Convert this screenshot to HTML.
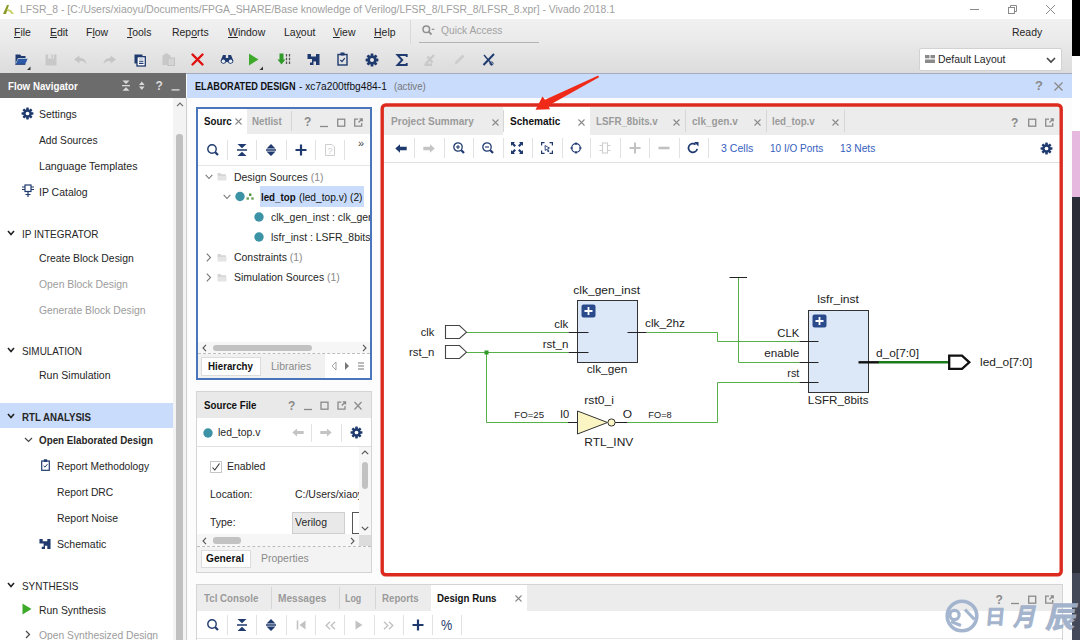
<!DOCTYPE html>
<html><head><meta charset="utf-8"><title>LFSR_8 - Vivado 2018.1</title>
<style>
*{box-sizing:border-box;margin:0;padding:0}
html,body{width:1080px;height:640px;overflow:hidden;background:#fff;font-family:"Liberation Sans",sans-serif;font-size:11.2px;color:#262626}
.a{position:absolute}
.t{position:absolute;white-space:nowrap;line-height:14px;height:14px;font-size:11.2px;transform:scaleX(.935);transform-origin:0 50%}
.b{font-weight:bold;transform:scaleX(.87)}
.g{color:#9c9c9c}
.r{transform-origin:100% 50%}
u{text-decoration:underline;text-underline-offset:1px}
svg{position:absolute;overflow:visible}
#win{left:0;top:0;width:1072px;height:640px;background:#fcfcfc;overflow:hidden}
</style></head><body>
<div id="win" class="a">
<!-- title bar -->
<div class="a" style="left:0;top:0;width:1072px;height:19px;background:#fff"></div>
<svg style="left:2px;top:3px" width="13" height="13" viewBox="0 0 13 13"><path d="M1 11 L5 2 L7 2 L4 11 Z" fill="#8c9a2a"/><path d="M5.5 6 L9 7 L12 11 L9.5 11 L7.5 8.5 L4.8 8 Z" fill="#c9d36a"/></svg>
<div class="t" style="left:20px;top:3px;font-size:10.400px;color:#a0a0a0;transform:scaleX(0.9986);">LFSR_8 - [C:/Users/xiaoyu/Documents/FPGA_SHARE/Base knowledge of Verilog/LFSR_8/LFSR_8/LFSR_8.xpr] - Vivado 2018.1</div>
<svg style="left:970px;top:4px" width="90" height="12" viewBox="0 0 90 12" fill="none" stroke="#8a8a8a" stroke-width="1"><path d="M0 5.5 H9"/><rect x="38.5" y="3.5" width="6" height="6"/><path d="M40.500 3.5 V1.5 H46.500 V7.500 H44.500"/><path d="M76 1 L85 10 M85 1 L76 10"/></svg>

<!-- menu bar -->
<div class="a" style="left:0;top:19px;width:1072px;height:54px;background:linear-gradient(#f1f1f1,#e9e9e9 45%,#dcdcdc)"></div>
<div class="t" style="left:14px;top:25px"><u>F</u>ile</div>
<div class="t" style="left:50px;top:25px"><u>E</u>dit</div>
<div class="t" style="left:86px;top:25px">F<u>l</u>ow</div>
<div class="t" style="left:127px;top:25px"><u>T</u>ools</div>
<div class="t" style="left:172px;top:25px">Rep<u>o</u>rts</div>
<div class="t" style="left:228px;top:25px"><u>W</u>indow</div>
<div class="t" style="left:284px;top:25px">La<u>y</u>out</div>
<div class="t" style="left:333px;top:25px"><u>V</u>iew</div>
<div class="t" style="left:374px;top:25px"><u>H</u>elp</div>
<div class="a" style="left:410px;top:20px;width:1px;height:24px;background:#d8d8d8"></div>
<svg style="left:421.500px;top:25px" width="16" height="11" viewBox="0 0 16 11" fill="none" stroke="#8f8f8f" stroke-width="1.500"><circle cx="4.300" cy="4.300" r="3.300"/><path d="M6.600 6.600 L9.500 9.500" stroke-width="1.800"/><path d="M9.800 4.300 H12.300" stroke-width="1.200"/></svg>
<div class="t" style="left:440.500px;top:23.300px;color:#a2a2a2;transform:scaleX(0.9158);">Quick Access</div>
<div class="a" style="left:419px;top:42px;width:120px;height:1px;background:#b4b4b4"></div>
<div class="t" style="left:1012px;top:25px">Ready</div>

<!-- toolbar -->
<div class="a" style="left:0;top:73px;width:1072px;height:1px;background:#a4adbd"></div>
<svg style="left:14px;top:53px" width="18" height="18" viewBox="0 0 18 18"><path d="M1.500 1.500 H6 L7.500 3 H11.500 V5 H4 L1.500 10.500 Z" fill="#1f3a6e"/><path d="M4.200 5.800 H13.600 L11.200 11.200 H1.800 Z" fill="#2d5aa6"/><path d="M1.500 10.700 L1.500 11.300 H11.300" stroke="#1f3a6e" stroke-width="1" fill="none"/><path d="M16.500 13.500 V17 H13 Z" fill="#333"/></svg>
<svg style="left:45px;top:54px" width="12" height="12" viewBox="0 0 12 12"><path d="M0.500 0.500 H11.500 V11.500 H0.500 Z" fill="#c8c8c8"/><rect x="3" y="0.500" width="6" height="4" fill="#e2e2e2"/><rect x="6.500" y="1" width="1.500" height="3" fill="#c8c8c8"/></svg>
<svg style="left:74px;top:55px" width="13" height="10" viewBox="0 0 13 10"><path d="M0 4.500 L5.500 0.500 V3 C9.500 3 12 5 12.500 9 C10.500 6.500 8.500 6 5.500 6 V8.500 Z" fill="#c6c6c6"/></svg>
<svg style="left:103px;top:55px" width="13" height="10" viewBox="0 0 13 10"><path d="M13 4.500 L7.500 0.500 V3 C3.500 3 1 5 0.500 9 C2.500 6.500 4.500 6 7.500 6 V8.500 Z" fill="#c6c6c6"/></svg>
<svg style="left:133.500px;top:53.500px" width="13" height="13" viewBox="0 0 13 13"><rect x="0.500" y="0.500" width="8" height="9" fill="#1f3a6e"/><rect x="3" y="2.700" width="8.300" height="9.300" fill="#fff" stroke="#1f3a6e" stroke-width="1.300"/><path d="M5 7.200 H9.500 M5 9.400 H9.500" stroke="#1f3a6e" stroke-width="1.100"/><path d="M5 5 H9.500" stroke="#8fa0c0" stroke-width="0.900"/></svg>
<svg style="left:162px;top:53px" width="13" height="13" viewBox="0 0 13 13"><rect x="0.500" y="2" width="8" height="10" fill="#c8c8c8"/><rect x="2.500" y="0.500" width="4" height="3" fill="#c8c8c8"/><rect x="6" y="5" width="6.500" height="7.500" fill="#d4d4d4" stroke="#c2c2c2" stroke-width="1"/></svg>
<svg style="left:191px;top:53px" width="13" height="13" viewBox="0 0 13 13"><path d="M1.500 1.500 L11.500 11.500 M11.500 1.500 L1.500 11.500" stroke="#e01010" stroke-width="2.400" stroke-linecap="round"/></svg>
<svg style="left:220px;top:54px" width="14" height="11" viewBox="0 0 14 11"><path d="M3 1 H5.800 V4 H8.200 V1 H11 L13.500 7 A3 3 0 0 1 7.800 8 H6.200 A3 3 0 0 1 0.500 7 Z" fill="#1f3a6e"/><circle cx="3.400" cy="7.300" r="1.700" fill="#e9eef8"/><circle cx="10.600" cy="7.300" r="1.700" fill="#e9eef8"/></svg>
<svg style="left:248px;top:52px" width="16" height="19" viewBox="0 0 16 19"><path d="M1 1.500 L10.500 7.500 L1 13.500 Z" fill="#3eaa2c"/><path d="M15 14.500 V18 H11.500 Z" fill="#333"/></svg>
<svg style="left:277px;top:53px" width="14" height="13" viewBox="0 0 14 13"><path d="M2.500 0.500 H6.500 V6.500 H8.500 L4.500 11.500 L0.500 6.500 H2.500 Z" fill="#2f9a2a"/><path d="M9.500 1 V11.500 M12.500 1 V11.500" stroke="#555" stroke-width="1.300" stroke-dasharray="2.500 1.300"/></svg>
<svg style="left:307px;top:53px" width="13" height="13" viewBox="0 0 13 13"><path d="M0.500 1 H4 V3.500 H9 V1 H12.500 V12 H9 V8.500 H6.500 V12 H3 V9.500 H5 V6 H0.500 Z" fill="#1f3a6e"/></svg>
<svg style="left:337px;top:52px" width="11" height="14" viewBox="0 0 11 14"><rect x="1" y="2.500" width="9" height="10.500" fill="none" stroke="#1f3a6e" stroke-width="1.400"/><rect x="3.500" y="0.500" width="4" height="3" fill="#1f3a6e"/><path d="M3.300 8 L5 9.600 L7.800 6.200" fill="none" stroke="#1f3a6e" stroke-width="1.200"/></svg>
<svg style="left:365px;top:53px" width="14" height="14" viewBox="-7 -7 14 14"><g fill="#1f3a6e"><circle r="4.600"/><rect x="-1.400" y="-6.400" width="2.800" height="12.800" rx="0.500"/><rect x="-1.400" y="-6.400" width="2.800" height="12.800" rx="0.500" transform="rotate(45)"/><rect x="-1.400" y="-6.400" width="2.800" height="12.800" rx="0.500" transform="rotate(90)"/><rect x="-1.400" y="-6.400" width="2.800" height="12.800" rx="0.500" transform="rotate(135)"/></g><circle r="2" fill="#e8e8e8"/></svg>
<svg style="left:395.500px;top:53.500px" width="12" height="12" viewBox="0 0 12 12"><path d="M10.700 3 V1 H1.500 L6.200 6 L1.500 11 H10.700 V9" fill="none" stroke="#1f3a6e" stroke-width="1.900" stroke-linejoin="miter"/></svg>
<svg style="left:424px;top:53px" width="13" height="13" viewBox="0 0 13 13"><path d="M2 10.500 L10 2 M3.500 3.500 L8.500 9.500 M0.500 11.700 H8" stroke="#c9c9c9" stroke-width="2.400" fill="none"/></svg>
<svg style="left:453px;top:53px" width="13" height="13" viewBox="0 0 13 13"><path d="M1.500 11.500 L2.500 8.500 L9.500 1.500 L11.500 3.500 L4.500 10.500 Z" fill="#cdcdcd"/></svg>
<svg style="left:482px;top:53px" width="13" height="13" viewBox="0 0 13 13"><path d="M1.500 12 L12 1" stroke="#1f3a6e" stroke-width="2"/><path d="M2 2 L8 9 L10 12" stroke="#1f3a6e" stroke-width="1.400" fill="none"/><circle cx="9.500" cy="10.500" r="1.600" fill="none" stroke="#1f3a6e" stroke-width="1"/></svg>
<!-- default layout -->
<div class="a" style="left:919px;top:48px;width:143px;height:23px;background:#fff;border:1px solid #d2d2d2;border-radius:2px"></div>
<svg style="left:925px;top:55px" width="10" height="8" viewBox="0 0 10 8" fill="#8a8a8a"><rect x="0" y="0" width="4.500" height="3.300"/><rect x="5.500" y="0" width="4.500" height="3.300"/><rect x="0" y="4.500" width="10" height="3.500"/></svg>
<div class="t" style="left:938px;top:52px">Default Layout</div>
<svg style="left:1046px;top:57px" width="10" height="6" viewBox="0 0 10 6"><path d="M1 1 L5 5 L9 1" fill="none" stroke="#444" stroke-width="1.600"/></svg>

<!-- flow navigator -->
<div class="a" style="left:0;top:73px;width:186px;height:25.500px;background:#6c6c6c"></div>
<div class="t b" style="left:8px;top:79px;color:#fff;transform:scaleX(0.8705);">Flow Navigator</div>
<svg style="left:122px;top:80px" width="60" height="12" viewBox="0 0 60 12" fill="#d9d9d9"><path d="M0.500 0.500 H7.500 L4 4 Z M0 5 H8 V6.200 H0 Z M4 7.200 L7.500 10.700 H0.500 Z"/><path d="M17 5 L19.800 1.500 L22.600 5 Z M17 6.500 H22.600 L19.800 10 Z"/><path d="M49.500 9.200 H57.500 V10.600 H49.500 Z"/></svg>
<div class="t b" style="left:155.500px;top:79px;color:#d9d9d9;font-size:12px;transform:none">?</div>
<div class="a" style="left:0;top:98px;width:173px;height:542px;background:#fff"></div>
<div class="a" style="left:173px;top:98px;width:12.500px;height:542px;background:#f3f3f3"></div>
<div class="a" style="left:185.500px;top:98px;width:1.200px;height:542px;background:#cfcfcf"></div>
<svg style="left:175.500px;top:102.300px" width="8" height="5" viewBox="0 0 8 5"><path d="M1 4.200 L4 1.200 L7 4.200" fill="none" stroke="#6a6a6a" stroke-width="1.200"/></svg>
<div class="a" style="left:176px;top:134px;width:6.500px;height:506px;background:#c0c0c0;border-radius:3.200px 3.200px 0 0"></div>

<svg style="left:21px;top:107px" width="13" height="13" viewBox="-7 -7 14 14"><g fill="#1f3a6e"><circle r="4.600"/><rect x="-1.400" y="-6.400" width="2.800" height="12.800" rx="0.500"/><rect x="-1.400" y="-6.400" width="2.800" height="12.800" rx="0.500" transform="rotate(45)"/><rect x="-1.400" y="-6.400" width="2.800" height="12.800" rx="0.500" transform="rotate(90)"/><rect x="-1.400" y="-6.400" width="2.800" height="12.800" rx="0.500" transform="rotate(135)"/></g><circle r="2" fill="#fff"/></svg>
<div class="t" style="left:39px;top:107px">Settings</div>
<div class="t" style="left:39px;top:133px;transform:scaleX(0.9147);">Add Sources</div>
<div class="t" style="left:39px;top:159px;transform:scaleX(0.9501);">Language Templates</div>
<svg style="left:22px;top:184px" width="12" height="14" viewBox="0 0 12 14" fill="none" stroke="#1f3a6e" stroke-width="1.200"><rect x="3" y="1" width="6" height="6.500"/><path d="M0 3 H3 M9 3 H12 M0 5.500 H3 M9 5.500 H12 M6 7.500 V13 M3.500 10.500 H8.500"/></svg>
<div class="t" style="left:39px;top:185px">IP Catalog</div>

<svg style="left:7px;top:230px" width="8" height="6" viewBox="0 0 8 6"><path d="M1 1 L4 4.500 L7 1" fill="none" stroke="#222" stroke-width="1.600"/></svg>
<div class="t" style="left:22px;top:227px;transform:scaleX(0.8928);">IP INTEGRATOR</div>
<div class="t" style="left:39px;top:251px;transform:scaleX(0.9286);">Create Block Design</div>
<div class="t g" style="left:39px;top:277px;transform:scaleX(0.9282);">Open Block Design</div>
<div class="t g" style="left:39px;top:303px;transform:scaleX(0.9257);">Generate Block Design</div>

<svg style="left:7px;top:347px" width="8" height="6" viewBox="0 0 8 6"><path d="M1 1 L4 4.500 L7 1" fill="none" stroke="#222" stroke-width="1.600"/></svg>
<div class="t" style="left:22px;top:344px;transform:scaleX(0.8868);">SIMULATION</div>
<div class="t" style="left:39px;top:368px;transform:scaleX(0.9437);">Run Simulation</div>

<div class="a" style="left:0;top:403px;width:173px;height:25px;background:#c9dcfb"></div>
<svg style="left:7px;top:413px" width="8" height="6" viewBox="0 0 8 6"><path d="M1 1 L4 4.500 L7 1" fill="none" stroke="#222" stroke-width="1.600"/></svg>
<div class="t b" style="left:22px;top:410px;transform:scaleX(0.8649);">RTL ANALYSIS</div>
<svg style="left:24px;top:437px" width="9" height="6" viewBox="0 0 9 6"><path d="M1 1 L4.500 4.500 L8 1" fill="none" stroke="#444" stroke-width="1.200"/></svg>
<div class="t b" style="left:39px;top:433px;transform:scaleX(0.8773);">Open Elaborated Design</div>
<svg style="left:41px;top:459px" width="9" height="12" viewBox="0 0 9 12"><rect x="0.700" y="2" width="7.600" height="9.300" fill="none" stroke="#1f3a6e" stroke-width="1.200"/><rect x="2.800" y="0.300" width="3.400" height="2.600" fill="#1f3a6e"/><path d="M2.600 6.800 L4 8.200 L6.400 5.200" fill="none" stroke="#1f3a6e" stroke-width="1"/></svg>
<div class="t" style="left:57px;top:459px;transform:scaleX(0.9132);">Report Methodology</div>
<div class="t" style="left:57px;top:485px;transform:scaleX(0.9239);">Report DRC</div>
<div class="t" style="left:57px;top:511px;transform:scaleX(0.9342);">Report Noise</div>
<svg style="left:39px;top:538px" width="12" height="12" viewBox="0 0 13 13"><path d="M0.500 1 H4 V3.500 H9 V1 H12.500 V12 H9 V8.500 H6.500 V12 H3 V9.500 H5 V6 H0.500 Z" fill="#1f3a6e"/></svg>
<div class="t" style="left:57px;top:537px;transform:scaleX(0.9438);">Schematic</div>

<svg style="left:7px;top:582px" width="8" height="6" viewBox="0 0 8 6"><path d="M1 1 L4 4.500 L7 1" fill="none" stroke="#222" stroke-width="1.600"/></svg>
<div class="t" style="left:22px;top:579px;transform:scaleX(0.8877);">SYNTHESIS</div>
<svg style="left:22px;top:603px" width="10" height="12" viewBox="0 0 10 12"><path d="M0.500 0.500 L9.500 6 L0.500 11.500 Z" fill="#3eaa2c"/></svg>
<div class="t" style="left:39px;top:603px;transform:scaleX(0.9274);">Run Synthesis</div>
<svg style="left:25px;top:630px" width="6" height="9" viewBox="0 0 6 9"><path d="M1 1 L4.500 4.500 L1 8" fill="none" stroke="#444" stroke-width="1.200"/></svg>
<div class="t g" style="left:39px;top:628px;transform:scaleX(0.9207);">Open Synthesized Design</div>

<!-- elaborated design header -->
<div class="a" style="left:187px;top:74px;width:885px;height:24px;background:#c9dcfb"></div>
<div class="t b" style="left:195.400px;top:78.500px;color:#111;transform:scaleX(0.8187);">ELABORATED DESIGN</div>
<div class="t" style="left:299px;top:78.500px;color:#111;transform:scaleX(0.9107);">- xc7a200tfbg484-1</div>
<div class="t" style="left:393.500px;top:78.500px;color:#777;transform:scaleX(0.8668);">(active)</div>
<div class="t b" style="left:1035px;top:79px;color:#8a8a8a;font-size:13px;transform:none">?</div>
<svg style="left:1054px;top:82px" width="9" height="9" viewBox="0 0 9 9"><path d="M0.500 0.500 L8.500 8.500 M8.500 0.500 L0.500 8.500" stroke="#8a8a8a" stroke-width="1.300"/></svg>

<!-- sources panel -->
<div class="a" style="left:196px;top:107px;width:176px;height:273px;background:#fff;border:2px solid #4a74bc"></div>
<div class="a" style="left:247px;top:109px;width:123px;height:25px;background:#ececec"></div>
<div class="t b" style="left:204px;top:114px;color:#111">Sourc</div>
<svg style="left:235px;top:118px" width="7" height="7" viewBox="0 0 7 7"><path d="M0.500 0.500 L6.500 6.500 M6.500 0.500 L0.500 6.500" stroke="#8a8a8a" stroke-width="1.100"/></svg>
<div class="t b" style="left:252px;top:114px;color:#9a9a9a">Netlist</div>
<div class="a" style="left:291px;top:111px;width:1px;height:20px;background:#d4d4d4"></div>
<div class="t b" style="left:304px;top:115px;color:#8a8a8a;font-size:12px;transform:none">?</div>
<svg style="left:320px;top:118px" width="45" height="10" viewBox="0 0 45 10" fill="none" stroke="#8a8a8a" stroke-width="1.300"><path d="M0 8.500 H8"/><rect x="17.700" y="1.200" width="7" height="7"/><path d="M38 1.200 H34.700 V8.200 H41.700 V5 M38.500 4.500 L42 1 M39.500 0.800 H42.200 V3.500"/></svg>
<!-- toolbar -->
<svg style="left:207px;top:144px" width="12" height="12" viewBox="0 0 12 12" fill="none" stroke="#1f3a6e"><circle cx="5" cy="5" r="4.200" stroke-width="1.400"/><path d="M8.200 8.200 L11 11" stroke-width="2.200"/></svg>
<div class="a" style="left:227px;top:140px;width:1px;height:20px;background:#e2e2e2"></div>
<svg style="left:237px;top:144px" width="10" height="12" viewBox="0 0 10 12" fill="#1f3a6e"><path d="M0.500 0 H9.500 L5 4.200 Z M0 5.200 H10 V6.800 H0 Z M5 7.800 L9.500 12 H0.500 Z"/></svg>
<div class="a" style="left:256px;top:140px;width:1px;height:20px;background:#e2e2e2"></div>
<svg style="left:266px;top:144px" width="10" height="12" viewBox="0 0 10 12" fill="#1f3a6e"><path d="M0.500 4.500 L5 0 L9.500 4.500 Z M0 5.300 H10 V6.700 H0 Z M0.500 7.500 H9.500 L5 12 Z"/></svg>
<div class="a" style="left:286px;top:140px;width:1px;height:20px;background:#e2e2e2"></div>
<svg style="left:295px;top:144px" width="12" height="12" viewBox="0 0 12 12"><path d="M6 0.500 V11.500 M0.500 6 H11.500" stroke="#1f3a6e" stroke-width="2.200"/></svg>
<div class="a" style="left:315px;top:140px;width:1px;height:20px;background:#e2e2e2"></div>
<svg style="left:325px;top:144px" width="10" height="12" viewBox="0 0 10 12"><path d="M0.500 0.500 H7 L9.500 3 V11.500 H0.500 Z" fill="none" stroke="#cfcfcf" stroke-width="1"/></svg>
<div class="t" style="left:327.500px;top:144px;color:#cfcfcf;font-size:9px;transform:none">?</div>
<div class="a" style="left:344px;top:140px;width:1px;height:20px;background:#e2e2e2"></div>
<div class="t" style="left:358px;top:136px;color:#444;font-size:11px;transform:none">»</div>
<div class="a" style="left:198px;top:165px;width:172px;height:1px;background:#e4e4e4"></div>
<!-- tree -->
<svg style="left:205px;top:174px" width="8" height="6" viewBox="0 0 8 6"><path d="M0.700 0.800 L4 4.500 L7.300 0.800" fill="none" stroke="#777" stroke-width="1.100"/></svg>
<svg style="left:217px;top:172px" width="10" height="9" viewBox="0 0 10 9"><path d="M0.500 1 H3.500 L4.500 2.200 H9 V4 H0.500 Z" fill="#d6d6d6"/><rect x="0.500" y="4" width="9" height="4.500" fill="#e4e4e4"/></svg>
<div class="t" style="left:233.500px;top:169.500px">Design Sources <span style="color:#8a8a8a">(1)</span></div>
<div class="a" style="left:260px;top:186px;width:104px;height:21px;background:#c9dcfb"></div>
<svg style="left:223px;top:194px" width="8" height="6" viewBox="0 0 8 6"><path d="M0.700 0.800 L4 4.500 L7.300 0.800" fill="none" stroke="#777" stroke-width="1.100"/></svg>
<svg style="left:235px;top:191px" width="20" height="11" viewBox="0 0 20 11"><circle cx="5" cy="5.500" r="4.700" fill="#3d93a6"/><rect x="14" y="2.500" width="2.400" height="2.400" fill="#4d8a3a"/><rect x="11.500" y="6.300" width="2.400" height="2.400" fill="#6aa055"/><rect x="16.300" y="6.300" width="2.400" height="2.400" fill="#6aa055"/></svg>
<div class="t b" style="left:261px;top:189.500px;color:#111">led_top</div>
<div class="t" style="left:298.700px;top:189.500px;color:#111;transform:scaleX(0.9118);">(led_top.v) (2)</div>
<svg style="left:254px;top:212px" width="10" height="10" viewBox="0 0 10 10"><circle cx="5" cy="5" r="4.700" fill="#3d93a6"/></svg>
<div class="a" style="left:270px;top:208px;width:99.500px;height:18px;overflow:hidden"><div class="t" style="left:0.500px;top:2px">clk_gen_inst : clk_gen (clk_gen.v)</div></div>
<svg style="left:254px;top:232px" width="10" height="10" viewBox="0 0 10 10"><circle cx="5" cy="5" r="4.700" fill="#3d93a6"/></svg>
<div class="a" style="left:270px;top:228px;width:99.500px;height:18px;overflow:hidden"><div class="t" style="left:0.500px;top:2px">lsfr_inst : LSFR_8bits (LSFR_8bits.v)</div></div>
<svg style="left:206px;top:252.500px" width="6" height="9" viewBox="0 0 6 9"><path d="M0.800 0.700 L4.500 4.500 L0.800 8.300" fill="none" stroke="#777" stroke-width="1.100"/></svg>
<svg style="left:217px;top:253px" width="10" height="9" viewBox="0 0 10 9"><path d="M0.500 1 H3.500 L4.500 2.200 H9 V4 H0.500 Z" fill="#d6d6d6"/><rect x="0.500" y="4" width="9" height="4.500" fill="#e4e4e4"/></svg>
<div class="t" style="left:233.500px;top:250px">Constraints <span style="color:#8a8a8a">(1)</span></div>
<svg style="left:206px;top:272.500px" width="6" height="9" viewBox="0 0 6 9"><path d="M0.800 0.700 L4.500 4.500 L0.800 8.300" fill="none" stroke="#777" stroke-width="1.100"/></svg>
<svg style="left:217px;top:273px" width="10" height="9" viewBox="0 0 10 9"><path d="M0.500 1 H3.500 L4.500 2.200 H9 V4 H0.500 Z" fill="#d6d6d6"/><rect x="0.500" y="4" width="9" height="4.500" fill="#e4e4e4"/></svg>
<div class="t" style="left:233.500px;top:270px">Simulation Sources <span style="color:#8a8a8a">(1)</span></div>
<!-- h scrollbar -->
<div class="a" style="left:198px;top:342px;width:172px;height:11px;background:#f6f6f6"></div>
<svg style="left:202px;top:344px" width="5" height="8" viewBox="0 0 5 8"><path d="M4 0.800 L1 4 L4 7.200" fill="none" stroke="#555" stroke-width="1.100"/></svg>
<svg style="left:362px;top:344px" width="5" height="8" viewBox="0 0 5 8"><path d="M1 0.800 L4 4 L1 7.200" fill="none" stroke="#555" stroke-width="1.100"/></svg>
<div class="a" style="left:213px;top:344.500px;width:98.500px;height:6.500px;background:#c2c2c2;border-radius:3.200px"></div>
<div class="a" style="left:198px;top:353px;width:172px;height:0;border-top:1px dashed #bdbdbd"></div>
<!-- bottom tabs -->
<div class="a" style="left:198px;top:354px;width:127px;height:24px;background:#f1f1f1"></div>
<div class="a" style="left:201px;top:357px;width:60px;height:19px;background:#fff;border:1px solid #dcdcdc"></div>
<div class="t b" style="left:207.500px;top:359px;color:#111">Hierarchy</div>
<div class="t" style="left:271px;top:359px;color:#8a8a8a">Libraries</div>
<svg style="left:331px;top:361px" width="35" height="10" viewBox="0 0 35 10"><path d="M5 1 L1 5 L5 9 Z" fill="none" stroke="#9a9a9a" stroke-width="0.900"/><path d="M14 1 L18 5 L14 9 Z" fill="#777"/><path d="M27 2 H33 M27 5 H33 M27 8 H33" stroke="#777" stroke-width="1.200"/></svg>

<!-- source file panel -->
<div class="a" style="left:196px;top:391px;width:176px;height:182px;background:#fff;border:1px solid #d4d4d4"></div>
<div class="a" style="left:197px;top:392px;width:174px;height:26px;background:#e9e9e9"></div>
<div class="t b" style="left:204px;top:398px;color:#111">Source File</div>
<div class="t b" style="left:288px;top:399px;color:#8a8a8a;font-size:12px;transform:none">?</div>
<svg style="left:304px;top:401px" width="60" height="10" viewBox="0 0 60 10" fill="none" stroke="#8a8a8a" stroke-width="1.300"><path d="M0 8.500 H8"/><rect x="17" y="1.200" width="7" height="7"/><path d="M37.300 1.200 H34 V8.200 H41 V5 M37.800 4.500 L41.300 1 M38.800 0.800 H41.500 V3.500"/><path d="M50.500 1 L57.500 8.500 M57.500 1 L50.500 8.500" stroke-width="1.200"/></svg>
<svg style="left:203px;top:428px" width="10" height="10" viewBox="0 0 10 10"><circle cx="5" cy="5" r="4.700" fill="#3d93a6"/></svg>
<div class="t" style="left:217.500px;top:424.800px">led_top.v</div>
<svg style="left:292px;top:428px" width="12" height="9" viewBox="0 0 12 9"><path d="M0.300 4.500 L5 0.500 V3 H11.700 V6 H5 V8.500 Z" fill="#c4c4c4"/></svg>
<div class="a" style="left:311px;top:424px;width:1px;height:18px;background:#e2e2e2"></div>
<svg style="left:320px;top:428px" width="12" height="9" viewBox="0 0 12 9"><path d="M11.700 4.500 L7 0.500 V3 H0.300 V6 H7 V8.500 Z" fill="#c4c4c4"/></svg>
<div class="a" style="left:341px;top:424px;width:1px;height:18px;background:#e2e2e2"></div>
<svg style="left:349.500px;top:426px" width="13" height="13" viewBox="-7 -7 14 14"><g fill="#1f3a6e"><circle r="4.600"/><rect x="-1.400" y="-6.400" width="2.800" height="12.800" rx="0.500"/><rect x="-1.400" y="-6.400" width="2.800" height="12.800" rx="0.500" transform="rotate(45)"/><rect x="-1.400" y="-6.400" width="2.800" height="12.800" rx="0.500" transform="rotate(90)"/><rect x="-1.400" y="-6.400" width="2.800" height="12.800" rx="0.500" transform="rotate(135)"/></g><circle r="2" fill="#fff"/></svg>
<div class="a" style="left:197px;top:446px;width:174px;height:1px;background:#e0e0e0"></div>
<!-- content -->
<div class="a" style="left:210px;top:461px;width:12px;height:12px;background:#fff;border:1px solid #c6c6c6"></div>
<svg style="left:211px;top:462px" width="10" height="10" viewBox="0 0 10 10"><path d="M1.500 5.500 L3.800 8 L8.500 1.500" fill="none" stroke="#333" stroke-width="1.100"/></svg>
<div class="t" style="left:227px;top:459px">Enabled</div>
<div class="t" style="left:210px;top:486.700px">Location:</div>
<div class="a" style="left:294px;top:486px;width:64.500px;height:18px;overflow:hidden"><div class="t" style="left:0.500px;top:0.700px">C:/Users/xiaoyu/Documents</div></div>
<div class="t" style="left:210px;top:515px">Type:</div>
<div class="a" style="left:292px;top:512px;width:53px;height:22px;background:#e9e9e9;border:1px solid #cfcfcf"></div>
<div class="t" style="left:294.500px;top:515px">Verilog</div>
<div class="a" style="left:351.500px;top:512px;width:7.500px;height:22px;background:#fff;border:1px solid #555;border-right:none"></div>
<!-- v scrollbar -->
<div class="a" style="left:359px;top:447px;width:12px;height:88px;background:#f6f6f6"></div>
<svg style="left:361px;top:450px" width="8" height="5" viewBox="0 0 8 5"><path d="M0.800 4.200 L4 1 L7.200 4.200" fill="none" stroke="#555" stroke-width="1.100"/></svg>
<svg style="left:361px;top:526px" width="8" height="5" viewBox="0 0 8 5"><path d="M0.800 0.800 L4 4 L7.200 0.800" fill="none" stroke="#555" stroke-width="1.100"/></svg>
<div class="a" style="left:362px;top:462px;width:6px;height:27px;background:#c2c2c2;border-radius:3px"></div>
<!-- h scrollbar -->
<div class="a" style="left:197px;top:534px;width:162px;height:12px;background:#f6f6f6"></div>
<div class="a" style="left:359px;top:535px;width:12px;height:11px;background:#dcdcdc"></div>
<svg style="left:202px;top:536.500px" width="5" height="8" viewBox="0 0 5 8"><path d="M4 0.800 L1 4 L4 7.200" fill="none" stroke="#555" stroke-width="1.100"/></svg>
<svg style="left:350px;top:536.500px" width="5" height="8" viewBox="0 0 5 8"><path d="M1 0.800 L4 4 L1 7.200" fill="none" stroke="#555" stroke-width="1.100"/></svg>
<div class="a" style="left:213px;top:537px;width:28px;height:6.500px;background:#c2c2c2;border-radius:3.200px"></div>
<div class="a" style="left:197px;top:546px;width:174px;height:0;border-top:1px dashed #bdbdbd"></div>
<div class="a" style="left:197px;top:547px;width:174px;height:25px;background:#f3f3f3"></div>
<div class="a" style="left:201px;top:550px;width:50px;height:18px;background:#fff;border:1px solid #dcdcdc"></div>
<div class="t b" style="left:206.300px;top:551px;color:#111;transform:scaleX(0.9119);">General</div>
<div class="t" style="left:261px;top:551px;color:#8a8a8a">Properties</div>

<!-- main panel -->
<div class="a" style="left:384px;top:107px;width:676px;height:466px;background:#fff"></div>
<div class="a" style="left:384px;top:107px;width:676px;height:28px;background:#ececec"></div>
<div class="a" style="left:503px;top:107px;width:87px;height:28px;background:#fff"></div>
<div class="t b" style="left:391.200px;top:114px;color:#9a9a9a;transform:scaleX(0.8997);">Project Summary</div>
<svg style="left:491.500px;top:118.500px" width="7" height="7" viewBox="0 0 7 7"><path d="M0.500 0.500 L6.500 6.500 M6.500 0.500 L0.500 6.500" stroke="#8a8a8a" stroke-width="1.100"/></svg>
<div class="a" style="left:502.500px;top:110px;width:1px;height:22px;background:#d6d6d6"></div>
<div class="t b" style="left:509.700px;top:114px;color:#111;transform:scaleX(0.8987);">Schematic</div>
<svg style="left:578px;top:118.500px" width="7" height="7" viewBox="0 0 7 7"><path d="M0.500 0.500 L6.500 6.500 M6.500 0.500 L0.500 6.500" stroke="#8a8a8a" stroke-width="1.100"/></svg>
<div class="t b" style="left:595.500px;top:114px;color:#9a9a9a">LSFR_8bits.v</div>
<svg style="left:673px;top:118.500px" width="7" height="7" viewBox="0 0 7 7"><path d="M0.500 0.500 L6.500 6.500 M6.500 0.500 L0.500 6.500" stroke="#8a8a8a" stroke-width="1.100"/></svg>
<div class="a" style="left:685px;top:110px;width:1px;height:22px;background:#d6d6d6"></div>
<div class="t b" style="left:691.700px;top:114px;color:#9a9a9a;transform:scaleX(0.8980);">clk_gen.v</div>
<svg style="left:754px;top:118.500px" width="7" height="7" viewBox="0 0 7 7"><path d="M0.500 0.500 L6.500 6.500 M6.500 0.500 L0.500 6.500" stroke="#8a8a8a" stroke-width="1.100"/></svg>
<div class="a" style="left:766px;top:110px;width:1px;height:22px;background:#d6d6d6"></div>
<div class="t b" style="left:772px;top:114px;color:#9a9a9a">led_top.v</div>
<svg style="left:831.500px;top:118.500px" width="7" height="7" viewBox="0 0 7 7"><path d="M0.500 0.500 L6.500 6.500 M6.500 0.500 L0.500 6.500" stroke="#8a8a8a" stroke-width="1.100"/></svg>
<div class="a" style="left:844px;top:110px;width:1px;height:22px;background:#d6d6d6"></div>
<div class="t b" style="left:1011px;top:116px;color:#8a8a8a;font-size:12px;transform:none">?</div>
<svg style="left:1011px;top:118px" width="45" height="10" viewBox="0 0 45 10" fill="none" stroke="#8a8a8a" stroke-width="1.300"><rect x="17.700" y="1.200" width="7" height="7"/><path d="M38 1.200 H34.700 V8.200 H41.700 V5 M38.500 4.500 L42 1 M39.500 0.800 H42.200 V3.500"/></svg>
<!-- schematic toolbar -->
<svg style="left:395px;top:143.500px" width="12" height="9" viewBox="0 0 12 9"><path d="M0.300 4.500 L5 0.300 V2.800 H11.700 V6.200 H5 V8.700 Z" fill="#1f3a6e"/></svg>
<div class="a" style="left:414px;top:138px;width:1px;height:20px;background:#e2e2e2"></div>
<svg style="left:423px;top:143.500px" width="12" height="9" viewBox="0 0 12 9"><path d="M11.700 4.500 L7 0.300 V2.800 H0.300 V6.200 H7 V8.700 Z" fill="#c4c4c4"/></svg>
<div class="a" style="left:444px;top:138px;width:1px;height:20px;background:#e2e2e2"></div>
<svg style="left:453px;top:142px" width="12" height="12" viewBox="0 0 12 12" fill="none" stroke="#1f3a6e"><circle cx="5" cy="5" r="4.200" stroke-width="1.300"/><path d="M8.300 8.300 L11 11" stroke-width="2.200"/><path d="M3 5 H7 M5 3 V7" stroke-width="1.100"/></svg>
<div class="a" style="left:473px;top:138px;width:1px;height:20px;background:#e2e2e2"></div>
<svg style="left:482px;top:142px" width="12" height="12" viewBox="0 0 12 12" fill="none" stroke="#1f3a6e"><circle cx="5" cy="5" r="4.200" stroke-width="1.300"/><path d="M8.300 8.300 L11 11" stroke-width="2.200"/><path d="M3 5 H7" stroke-width="1.100"/></svg>
<div class="a" style="left:502.500px;top:138px;width:1px;height:20px;background:#e2e2e2"></div>
<svg style="left:511px;top:142px" width="12" height="12" viewBox="0 0 12 12" fill="#1f3a6e"><path d="M0 0 H4 L2.800 1.200 L5 3.400 L3.400 5 L1.200 2.800 L0 4 Z"/><path d="M12 0 V4 L10.800 2.800 L8.600 5 L7 3.400 L9.200 1.200 L8 0 Z"/><path d="M0 12 V8 L1.200 9.200 L3.400 7 L5 8.600 L2.800 10.800 L4 12 Z"/><path d="M12 12 H8 L9.200 10.800 L7 8.600 L8.600 7 L10.800 9.200 L12 8 Z"/></svg>
<div class="a" style="left:532px;top:138px;width:1px;height:20px;background:#e2e2e2"></div>
<svg style="left:541px;top:142px" width="12" height="12" viewBox="0 0 12 12" fill="none" stroke="#1f3a6e" stroke-width="1.200"><path d="M0.600 3.500 V0.600 H3.500 M8.500 0.600 H11.400 V3.500 M0.600 8.500 V11.400 H3.500 M11.400 8.500 V11.400 H8.500"/><path d="M4 3.500 L8.500 6 L6.600 6.800 L8 9.300 L7 9.800 L5.700 7.300 L4.300 8.500 Z" stroke-width="0.900"/></svg>
<div class="a" style="left:561.500px;top:138px;width:1px;height:20px;background:#e2e2e2"></div>
<svg style="left:570px;top:142px" width="12" height="12" viewBox="0 0 12 12" fill="none" stroke="#1f3a6e"><circle cx="6" cy="6" r="4.300" stroke-width="1.200"/><path d="M6 0.300 V3 M6 9 V11.700 M0.300 6 H3 M9 6 H11.700" stroke-width="1.200"/></svg>
<div class="a" style="left:590px;top:138px;width:1px;height:20px;background:#e2e2e2"></div>
<svg style="left:599px;top:142px" width="12" height="12" viewBox="0 0 12 12" fill="none" stroke="#cfcfcf" stroke-width="1.100"><rect x="3.500" y="1" width="5" height="10"/><path d="M0.500 3.500 H3.500 M0.500 8.500 H3.500 M8.500 3.500 H11.500 M8.500 8.500 H11.500"/></svg>
<div class="a" style="left:620px;top:138px;width:1px;height:20px;background:#e2e2e2"></div>
<svg style="left:628.500px;top:142px" width="12" height="12" viewBox="0 0 12 12"><path d="M6 0.500 V11.500 M0.500 6 H11.500" stroke="#c2c2c2" stroke-width="2"/></svg>
<div class="a" style="left:649px;top:138px;width:1px;height:20px;background:#e2e2e2"></div>
<svg style="left:657.500px;top:142px" width="12" height="12" viewBox="0 0 12 12"><path d="M0.500 6 H11.500" stroke="#c2c2c2" stroke-width="2.600"/></svg>
<div class="a" style="left:678.500px;top:138px;width:1px;height:20px;background:#e2e2e2"></div>
<svg style="left:687px;top:142px" width="12" height="12" viewBox="0 0 12 12"><path d="M10.200 6.800 A4.400 4.400 0 1 1 8.600 2.500" fill="none" stroke="#1f3a6e" stroke-width="1.700"/><path d="M7 0 H11.500 V4.500 Z" fill="#1f3a6e"/></svg>
<div class="a" style="left:708px;top:138px;width:1px;height:20px;background:#e2e2e2"></div>
<div class="t" style="left:720.500px;top:141px;color:#3560c0;transform:scaleX(0.9444);">3 Cells</div>
<div class="t" style="left:769.500px;top:141px;color:#3560c0;transform:scaleX(0.8928);">10 I/O Ports</div>
<div class="t" style="left:840.200px;top:141px;color:#3560c0;transform:scaleX(0.9154);">13 Nets</div>
<svg style="left:1040px;top:141.500px" width="13" height="13" viewBox="-7 -7 14 14"><g fill="#1f3a6e"><circle r="4.600"/><rect x="-1.400" y="-6.400" width="2.800" height="12.800" rx="0.500"/><rect x="-1.400" y="-6.400" width="2.800" height="12.800" rx="0.500" transform="rotate(45)"/><rect x="-1.400" y="-6.400" width="2.800" height="12.800" rx="0.500" transform="rotate(90)"/><rect x="-1.400" y="-6.400" width="2.800" height="12.800" rx="0.500" transform="rotate(135)"/></g><circle r="2" fill="#fff"/></svg>
<div class="a" style="left:384px;top:162px;width:676px;height:1px;background:#e2e2e2"></div>

<!-- schematic -->
<svg style="left:0;top:0" width="1072" height="640" viewBox="0 0 1072 640" font-family="Liberation Sans, sans-serif" font-size="11.8" fill="#222">
<g fill="none" stroke="#55b048" stroke-width="1">
<path d="M466.500 332.500 H568.500"/>
<path d="M466.500 352.500 H568.500"/>
<path d="M486.500 352.500 V422.500 H568"/>
<path d="M646.500 332.500 H717.500 V341.500 H799.500"/>
<path d="M738.500 277.500 V362.500 H799.500"/>
<path d="M627.500 422.500 H717.500 V382.500 H799.500"/>
</g>
<rect x="484.500" y="350.500" width="4" height="4" fill="#2f9a2a"/>
<path d="M878 362.300 H949" stroke="#1b7a1b" stroke-width="2.600" fill="none"/>
<!-- ports -->
<path d="M445.500 325.500 H459.500 L466.500 332.200 L459.500 338.500 H445.500 Z" fill="#fff" stroke="#444" stroke-width="1.100"/>
<path d="M445.500 345.500 H459.500 L466.500 352.200 L459.500 358.500 H445.500 Z" fill="#fff" stroke="#444" stroke-width="1.100"/>
<path d="M949.200 355.700 H962 L969.300 362.300 L962 368.900 H949.200 Z" fill="#fff" stroke="#111" stroke-width="2.300"/>
<!-- boxes -->
<rect x="577.500" y="300.500" width="60" height="62" fill="#dce8f8" stroke="#333" stroke-width="1"/>
<rect x="581.500" y="304.500" width="14" height="13" rx="2" fill="#2b4a8c"/>
<path d="M584.500 311 H592.500 M588.500 307 V315" stroke="#fff" stroke-width="1.800"/>
<rect x="808.500" y="310.500" width="60" height="82" fill="#dce8f8" stroke="#333" stroke-width="1"/>
<rect x="812.500" y="314.500" width="14" height="13" rx="2" fill="#2b4a8c"/>
<path d="M815.500 321 H823.500 M819.500 317 V325" stroke="#fff" stroke-width="1.800"/>
<g fill="none" stroke="#222" stroke-width="1">
<path d="M568.500 332.500 H588.500 M568.500 352.500 H588.500 M627.500 332.500 H646.500"/>
<path d="M568 422.500 H577.500 M615 422.500 H627.500"/>
<path d="M799.500 341.500 H818.500 M799.500 362.500 H818.500 M799.500 382.500 H818.500"/>
<path d="M729.500 277.500 H747"/>
</g>
<path d="M858.500 362.300 H878.500" stroke="#111" stroke-width="2.400" fill="none"/>
<!-- inverter -->
<path d="M577.500 411 L607.500 422.500 L577.500 434 Z" fill="#fbf5c4" stroke="#333" stroke-width="1"/>
<circle cx="611.500" cy="422.500" r="3.600" fill="#fbf5c4" stroke="#333" stroke-width="1"/>
<!-- labels -->
<text x="573.300" y="294.2" textLength="66.700" lengthAdjust="spacingAndGlyphs">clk_gen_inst</text>
<text x="554.300" y="327.5" textLength="14" lengthAdjust="spacingAndGlyphs">clk</text>
<text x="542.700" y="347.7" textLength="25.600" lengthAdjust="spacingAndGlyphs">rst_n</text>
<text x="645" y="327.0" textLength="40" lengthAdjust="spacingAndGlyphs">clk_2hz</text>
<text x="586.700" y="372.7" textLength="40.600" lengthAdjust="spacingAndGlyphs">clk_gen</text>
<text x="420.700" y="335.7" textLength="13.500" lengthAdjust="spacingAndGlyphs">clk</text>
<text x="409" y="355.7" textLength="25.300" lengthAdjust="spacingAndGlyphs">rst_n</text>
<text x="514.300" y="418.2" font-size="9.500" textLength="29.700" lengthAdjust="spacingAndGlyphs">FO=25</text>
<text x="560" y="418.1" textLength="9.300" lengthAdjust="spacingAndGlyphs">I0</text>
<text x="622.700" y="418.1" textLength="9.300" lengthAdjust="spacingAndGlyphs">O</text>
<text x="648.300" y="418.2" font-size="9.500" textLength="23.400" lengthAdjust="spacingAndGlyphs">FO=8</text>
<text x="584.300" y="404.0" textLength="29.700" lengthAdjust="spacingAndGlyphs">rst0_i</text>
<text x="584.300" y="446.2" textLength="49" lengthAdjust="spacingAndGlyphs">RTL_INV</text>
<text x="817.300" y="303.4" textLength="41.700" lengthAdjust="spacingAndGlyphs">lsfr_inst</text>
<text x="777.300" y="336.8" textLength="22" lengthAdjust="spacingAndGlyphs">CLK</text>
<text x="764.300" y="357.4" textLength="35" lengthAdjust="spacingAndGlyphs">enable</text>
<text x="787.300" y="377.4" textLength="12" lengthAdjust="spacingAndGlyphs">rst</text>
<text x="876" y="357.4" textLength="43" lengthAdjust="spacingAndGlyphs">d_o[7:0]</text>
<text x="980" y="365.7" textLength="52.300" lengthAdjust="spacingAndGlyphs">led_o[7:0]</text>
<text x="807.800" y="403.5" textLength="60.700" lengthAdjust="spacingAndGlyphs">LSFR_8bits</text>
<!-- red annotations -->
<rect x="382.200" y="105" width="679" height="469.800" rx="3.500" fill="none" stroke="#dc2a1e" stroke-width="3.400"/>
<path d="M598.300 75.600 L545 99.700 L542.500 96.500 L535.500 109.800 L550 109.300 L548.300 105.800 L599 77.200 Z" fill="#f02a18"/>
</svg>

<!-- bottom panel -->
<div class="a" style="left:196px;top:584px;width:867px;height:60px;background:#fff;border:1px solid #d4d4d4"></div>
<div class="a" style="left:197px;top:585px;width:865px;height:26px;background:#ececec"></div>
<div class="a" style="left:431px;top:585px;width:96px;height:26px;background:#fff"></div>
<div class="t b" style="left:203.800px;top:591px;color:#9a9a9a;transform:scaleX(0.8693);">Tcl Console</div>
<div class="a" style="left:271px;top:587px;width:1px;height:22px;background:#d6d6d6"></div>
<div class="t b" style="left:277.600px;top:591px;color:#9a9a9a;transform:scaleX(0.9047);">Messages</div>
<div class="a" style="left:339px;top:587px;width:1px;height:22px;background:#d6d6d6"></div>
<div class="t b" style="left:345.300px;top:591px;color:#9a9a9a;transform:scaleX(0.7945);">Log</div>
<div class="a" style="left:375px;top:587px;width:1px;height:22px;background:#d6d6d6"></div>
<div class="t b" style="left:381.600px;top:591px;color:#9a9a9a;transform:scaleX(0.8656);">Reports</div>
<div class="t b" style="left:437px;top:591px;color:#111">Design Runs</div>
<svg style="left:515px;top:595px" width="7" height="7" viewBox="0 0 7 7"><path d="M0.500 0.500 L6.500 6.500 M6.500 0.500 L0.500 6.500" stroke="#8a8a8a" stroke-width="1.100"/></svg>
<div class="t b" style="left:995.400px;top:593.400px;color:#8a8a8a;font-size:12px;transform:none">?</div>
<svg style="left:1011px;top:595.200px" width="45" height="10" viewBox="0 0 45 10" fill="none" stroke="#8a8a8a" stroke-width="1.300"><path d="M0 8.500 H8"/><rect x="17.700" y="1.200" width="7" height="7"/><path d="M38 1.200 H34.700 V8.200 H41.700 V5 M38.500 4.500 L42 1 M39.500 0.800 H42.200 V3.500"/></svg>
<!-- toolbar -->
<svg style="left:207px;top:619px" width="12" height="12" viewBox="0 0 12 12" fill="none" stroke="#1f3a6e"><circle cx="5" cy="5" r="4.200" stroke-width="1.400"/><path d="M8.200 8.200 L11 11" stroke-width="2.200"/></svg>
<div class="a" style="left:227px;top:615px;width:1px;height:20px;background:#e2e2e2"></div>
<svg style="left:237px;top:619px" width="10" height="12" viewBox="0 0 10 12" fill="#1f3a6e"><path d="M0.500 0 H9.500 L5 4.200 Z M0 5.200 H10 V6.800 H0 Z M5 7.800 L9.500 12 H0.500 Z"/></svg>
<div class="a" style="left:256px;top:615px;width:1px;height:20px;background:#e2e2e2"></div>
<svg style="left:266px;top:619px" width="10" height="12" viewBox="0 0 10 12" fill="#1f3a6e"><path d="M0.500 4.500 L5 0 L9.500 4.500 Z M0 5.300 H10 V6.700 H0 Z M0.500 7.500 H9.500 L5 12 Z"/></svg>
<div class="a" style="left:286px;top:615px;width:1px;height:20px;background:#e2e2e2"></div>
<svg style="left:296px;top:620px" width="10" height="10" viewBox="0 0 10 10"><path d="M1.500 0.500 V9.500" stroke="#c2c2c2" stroke-width="1.600"/><path d="M9.500 0.500 L3.500 5 L9.500 9.500 Z" fill="#c2c2c2"/></svg>
<div class="a" style="left:315px;top:615px;width:1px;height:20px;background:#e2e2e2"></div>
<svg style="left:325px;top:620.500px" width="11" height="9" viewBox="0 0 11 9" fill="none" stroke="#c2c2c2" stroke-width="1.400"><path d="M5 0.800 L1.200 4.500 L5 8.200 M10 0.800 L6.200 4.500 L10 8.200"/></svg>
<div class="a" style="left:344px;top:615px;width:1px;height:20px;background:#e2e2e2"></div>
<svg style="left:355px;top:620px" width="8" height="10" viewBox="0 0 8 10"><path d="M0.500 0.500 L7.500 5 L0.500 9.500 Z" fill="#c2c2c2"/></svg>
<div class="a" style="left:374px;top:615px;width:1px;height:20px;background:#e2e2e2"></div>
<svg style="left:383px;top:620.500px" width="11" height="9" viewBox="0 0 11 9" fill="none" stroke="#c2c2c2" stroke-width="1.400"><path d="M1 0.800 L4.800 4.500 L1 8.200 M6 0.800 L9.800 4.500 L6 8.200"/></svg>
<div class="a" style="left:403px;top:615px;width:1px;height:20px;background:#e2e2e2"></div>
<svg style="left:412px;top:619px" width="12" height="12" viewBox="0 0 12 12"><path d="M6 0.500 V11.500 M0.500 6 H11.500" stroke="#1f3a6e" stroke-width="2.200"/></svg>
<div class="a" style="left:432px;top:615px;width:1px;height:20px;background:#e2e2e2"></div>
<div class="t" style="left:441px;top:617px;color:#1f3a6e;font-size:14px;line-height:16px;height:16px;transform:scaleX(.9)">%</div>
<div class="a" style="left:461px;top:615px;width:1px;height:20px;background:#e2e2e2"></div>
<div class="a" style="left:197px;top:638px;width:865px;height:1px;background:#e6e6e6"></div>

</div>
<!-- right desktop strip -->
<div class="a" style="left:1072px;top:0;width:8px;height:56px;background:#000"></div>
<div class="a" style="left:1072px;top:56px;width:8px;height:75px;background:#fff"></div>
<div class="a" style="left:1072px;top:131px;width:8px;height:66px;background:#e6b8e0"></div>
<div class="a" style="left:1072px;top:197px;width:8px;height:376px;background:#2a2d38"></div>
<div class="a" style="left:1072px;top:573px;width:8px;height:67px;background:#444959"></div>
<!-- watermark -->
<svg style="left:945px;top:598.500px" width="34" height="34" viewBox="0 0 34 34" fill="none" stroke="#9db0cc" stroke-width="3.600" opacity="0.920"><circle cx="17" cy="17" r="14.800"/><circle cx="9.500" cy="16" r="4.600" stroke-width="3.200"/><path d="M6 22.500 L16 26.500 M20 10.500 L29.500 20.500" stroke-width="3.200"/></svg>
<div class="a" style="left:986px;top:598px;width:94px;height:36px;font-family:'Liberation Sans','Noto Sans CJK SC',sans-serif;font-weight:900;color:#a0b0ca;white-space:nowrap;line-height:36px;opacity:.95"><span style="position:absolute;left:-1.500px;top:0.500px;font-size:20.500px;transform:skewX(-5deg)">日</span><span style="position:absolute;left:26.500px;top:1px;font-size:25.500px;transform:skewX(-12deg) scaleX(.9)">月</span><span style="position:absolute;left:60.500px;top:1.500px;font-size:30px;transform:skewX(-12deg)">辰</span></div>

</body></html>
